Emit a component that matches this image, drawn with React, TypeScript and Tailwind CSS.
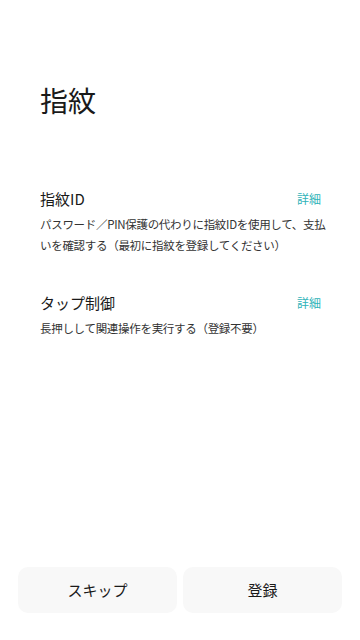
import React from "react";

const font = { fontFamily: '"Noto Sans CJK JP", "Noto Sans", sans-serif' };

const Section = ({ title, desc }: { title: string; desc: string }) => (
  <div className="px-10">
    <div className="flex items-center justify-between h-6">
      <p className="text-[15px] text-[#1a1a1a]">{title}</p>
      <span className="text-[12px] text-[#2fb3b9] mr-[-1px]">詳細</span>
    </div>
    <p className="mt-[3px] text-[11.5px] leading-[21px] tracking-[-0.3px] text-[#333] mr-[-12px]">{desc}</p>
  </div>
);

export default function App() {
  return (
    <div className="w-[360px] h-[640px] bg-white flex flex-col" style={font}>
      <h1 className="pl-10 pt-[80px] text-[28px] leading-[40px] text-[#1a1a1a]">指紋</h1>

      <div className="mt-[67px]">
        <Section
          title="指紋ID"
          desc="パスワード／PIN保護の代わりに指紋IDを使用して、支払いを確認する（最初に指紋を登録してください）"
        />
      </div>
      <div className="mt-[35px]">
        <Section title="タップ制御" desc="長押しして関連操作を実行する（登録不要）" />
      </div>

      <div className="mt-auto mb-[27px] px-[18px] flex gap-[6px]">
        <button className="flex-1 h-[46px] rounded-[10px] bg-[#f8f8f8] text-[15px] text-[#1a1a1a]">
          スキップ
        </button>
        <button className="flex-1 h-[46px] rounded-[10px] bg-[#f8f8f8] text-[15px] text-[#1a1a1a]">
          登録
        </button>
      </div>
    </div>
  );
}
